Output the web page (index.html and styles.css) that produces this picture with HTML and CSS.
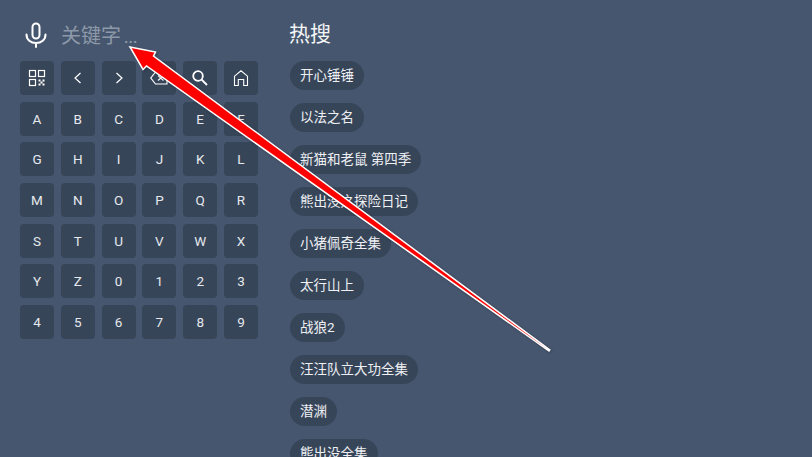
FILE: index.html
```html
<!DOCTYPE html>
<html>
<head>
<meta charset="utf-8"/>
<title>搜索</title>
<link rel="stylesheet" href="styles.css">
</head>
<body>

<div class="page">

<div class="left">
<div class="sbar">
<svg class="mic" viewBox="0 0 24 26" fill="none" stroke="#fff" stroke-width="2" stroke-linecap="round">
<rect x="8.500" y="1.500" width="7" height="15" rx="3.500"/>
<path d="M2.500 12.500c0 5.200 4.200 8.500 9.500 8.500s9.500-3.300 9.500-8.500M12 21v4"/>
</svg>
<span class="kw">关键字<span class="dots">...</span></span>
</div>

<div class="keys">
<a class="key"><svg viewBox="0 0 18 18" fill="none" stroke="#fff" stroke-width="1.200"><rect x="1.500" y="1.500" width="6" height="6"/><rect x="10.500" y="1.500" width="6" height="6"/><rect x="1.500" y="10.500" width="6" height="6"/><path d="M10.500 10.500h2v2h-2zM14.500 10.500h2v2h-2zM12.500 12.500h2v2h-2zM10.500 14.500h2v2h-2zM14.500 14.500h2v2h-2z" fill="#fff" stroke="none"/></svg></a>
<a class="key"><svg viewBox="0 0 18 18" fill="none" stroke="#fff" stroke-width="1.200"><path d="M11.500 4 6 9l5.500 5"/></svg></a>
<a class="key"><svg viewBox="0 0 18 18" fill="none" stroke="#fff" stroke-width="1.200"><path d="M6.500 4 12 9l-5.500 5"/></svg></a>
<a class="key"><svg viewBox="0 0 18 18" fill="none" stroke="#fff" stroke-width="1.200"><path d="M5.500 3H17v12H5.500L.8 9zM8 6.500l5.500 5M13.500 6.500 8 11.500"/></svg></a>
<a class="key"><svg viewBox="0 0 18 18" fill="none" stroke="#fff" stroke-width="1.800"><circle cx="7" cy="7" r="4.800"/><path d="m10.500 10.500 5.500 5.500"/></svg></a>
<a class="key"><svg viewBox="0 0 18 18" fill="none" stroke="#fff" stroke-width="1.100"><path d="M2.500 16.500V7.200L9 1.800l6.500 5.400v9.300h-3.800v-6H6.300v6z"/></svg></a>
<a class="key">A</a><a class="key">B</a><a class="key">C</a><a class="key">D</a><a class="key">E</a><a class="key">F</a>
<a class="key">G</a><a class="key">H</a><a class="key">I</a><a class="key">J</a><a class="key">K</a><a class="key">L</a>
<a class="key">M</a><a class="key">N</a><a class="key">O</a><a class="key">P</a><a class="key">Q</a><a class="key">R</a>
<a class="key">S</a><a class="key">T</a><a class="key">U</a><a class="key">V</a><a class="key">W</a><a class="key">X</a>
<a class="key">Y</a><a class="key">Z</a><a class="key">0</a><a class="key">1</a><a class="key">2</a><a class="key">3</a>
<a class="key">4</a><a class="key">5</a><a class="key">6</a><a class="key">7</a><a class="key">8</a><a class="key">9</a>
</div>
</div>

<div class="right">
<div class="hot">热搜</div>
<div class="tags">
<a class="tag">开心锤锤</a>
<a class="tag">以法之名</a>
<a class="tag">新猫和老鼠 第四季</a>
<a class="tag">熊出没之探险日记</a>
<a class="tag">小猪佩奇全集</a>
<a class="tag">太行山上</a>
<a class="tag">战狼2</a>
<a class="tag">汪汪队立大功全集</a>
<a class="tag">潜渊</a>
<a class="tag">熊出没全集</a>
</div>
</div>

</div>

<!-- annotation arrow over the page -->
<svg class="arrow" viewBox="0 0 812 457">
<polygon points="130,47 155.500,52 153.500,56.100 549.800,350 549,351 146.500,65.900 143,69.500" fill="#f00" stroke="#fff" stroke-width="1.500"/>
</svg>

</body>
</html>
```

FILE: styles.css
```css
html,body{margin:0;padding:0;}
body{width:812px;height:457px;overflow:hidden;background:#46566e;position:relative;
font-family:"Roboto","Noto Sans CJK SC",sans-serif;color:#fff;}

.page{display:flex;padding-left:20px;}
.left{width:238px;margin-right:32px;}
.right{flex:1;}

/** search bar **/
.sbar{display:flex;align-items:center;height:61px;padding-top:8px;box-sizing:border-box;}
.mic{width:24px;height:26px;margin:0 13px 0 4px;}
.kw{font-size:20px;color:#8d99a9;}
.dots{font-size:16px;font-weight:500;margin-left:3px;}

/** keyboard **/
.keys{display:grid;grid-template-columns:repeat(6,34px);grid-auto-rows:34px;gap:6.700px 6.800px;}
.key{display:flex;align-items:center;justify-content:center;background:#374559;border-radius:4px;
font-size:13.500px;color:#e6e9ed;}
.key svg{width:18px;height:18px;}

/** hot list **/
.hot{height:61px;padding-top:21px;box-sizing:border-box;font-size:21px;line-height:27px;color:#f4f5f7;margin-left:-1px;}
.tags{display:flex;flex-direction:column;align-items:flex-start;gap:13px;}
.tag{height:29px;line-height:29px;padding:0 10px;border-radius:15px;background:#374559;
font-size:13.500px;color:#eef0f3;white-space:nowrap;}

.arrow{position:absolute;left:0;top:0;width:812px;height:457px;filter:drop-shadow(1px 1px 1px rgba(0,0,0,.25));}
```
